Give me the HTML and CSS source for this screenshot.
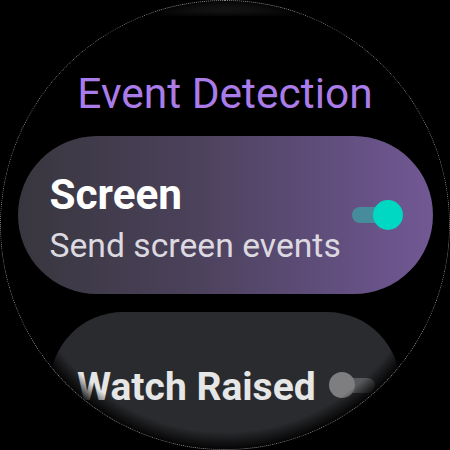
FILE: index.html
```html
<!DOCTYPE html>
<html>
<head>
<meta charset="utf-8">
<link rel="stylesheet" href="styles.css">
</head>
<body>
<div class="watch">
  <div class="prev"></div>
  <h1 class="title">Event Detection</h1>
  <div class="chip chip-on">
    <div class="chip-text">
      <div class="chip-label">Screen</div>
      <div class="chip-sub">Send screen events</div>
    </div>
    <div class="switch switch-on"></div>
  </div>
  <div class="chip chip-off">
    <div class="chip-text">
      <div class="chip-label chip-label-sm">Watch Raised</div>
    </div>
    <div class="switch switch-off"></div>
  </div>
  <div class="vignette"></div>
  <div class="rim"></div>
</div>
</body>
</html>
```
FILE: styles.css
```css
html, body {
  margin: 0;
  padding: 0;
  background: #000;
}
body {
  width: 450px;
  height: 450px;
  overflow: hidden;
  font-family: Roboto, "Noto Sans", sans-serif;
}
.watch {
  position: relative;
  width: 450px;
  height: 450px;
  border-radius: 50%;
  overflow: hidden;
  background: #000;
  display: flex;
  flex-direction: column;
  align-items: center;
}
.prev {
  width: 150px;
  height: 16px;
  flex: none;
  border-radius: 0 0 24px 24px;
  background: linear-gradient(#3a3a3d, #1c1c1e 70%, #050505);
}
.title {
  margin: 53px 0 0;
  font-size: 42.5px;
  line-height: 50px;
  font-weight: 400;
  color: #a97ce9;
  white-space: nowrap;
}
.chip {
  flex: none;
  display: flex;
  align-items: center;
  justify-content: space-between;
  box-sizing: border-box;
}
.chip-on {
  margin-top: 17px;
  width: 415px;
  height: 158px;
  border-radius: 79px;
  padding: 0 30px 0 32px;
  background: linear-gradient(90deg, #38363e 0%, #4a4159 40%, #604e7c 75%, #725894 100%);
}
.chip-off {
  margin-top: 18px;
  width: 350px;
  height: 146px;
  border-radius: 73px;
  padding: 0 25px 0 27px;
  background: #2a2b2e;
}
.chip-text {
  display: flex;
  flex-direction: column;
}
.chip-on .chip-text {
  margin-top: 7px;
}
.chip-off .chip-text {
  margin-top: 3px;
}
.chip-label {
  font-size: 42.3px;
  line-height: 46px;
  font-weight: 700;
  color: #ffffff;
  white-space: nowrap;
}
.chip-label-sm {
  font-size: 39px;
  line-height: 44px;
  color: #e6e6e6;
}
.chip-sub {
  margin-top: 8px;
  font-size: 33.7px;
  line-height: 40px;
  color: #dcd9e0;
  white-space: nowrap;
}
.switch {
  position: relative;
  flex: none;
}
.switch::before,
.switch::after {
  content: "";
  position: absolute;
}
.switch-on {
  width: 51px;
  height: 30px;
}
.switch-on::before {
  left: 0;
  top: 7px;
  width: 45px;
  height: 16px;
  border-radius: 8px;
  background: #478c9c;
}
.switch-on::after {
  right: 0;
  top: 0;
  width: 30px;
  height: 30px;
  border-radius: 50%;
  background: #00d8c3;
}
.switch-off {
  width: 46px;
  height: 26px;
}
.switch-off::before {
  right: 0;
  top: 6px;
  width: 40px;
  height: 15px;
  border-radius: 8px;
  background: #58595c;
}
.switch-off::after {
  left: 0;
  top: 0;
  width: 26px;
  height: 26px;
  border-radius: 50%;
  background: #7e7e80;
}
.vignette {
  position: absolute;
  inset: 0;
  border-radius: 50%;
  background: radial-gradient(circle closest-side, rgba(0,0,0,0) 92%, rgba(0,0,0,0.95) 100%);
  pointer-events: none;
}
.rim {
  position: absolute;
  inset: 0;
  border-radius: 50%;
  border: 1px dotted rgba(255,255,255,0.55);
  pointer-events: none;
}
```
